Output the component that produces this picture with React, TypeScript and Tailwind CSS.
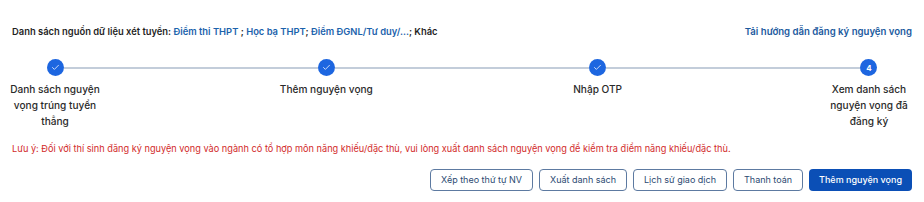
import { Check } from 'lucide-react';

const steps = [
  { label: 'Danh sách nguyện vọng trúng tuyển thẳng', done: true },
  { label: 'Thêm nguyện vọng', done: true },
  { label: 'Nhập OTP', done: true },
  { label: 'Xem danh sách nguyện vọng đã đăng ký', done: false },
];

const actions = ['Xếp theo thứ tự NV', 'Xuất danh sách', 'Lịch sử giao dịch', 'Thanh toán'];

function App() {
  return (
    <div className="min-h-screen bg-white font-['Inter','Noto_Sans',sans-serif] px-3 pt-[24px]">
      <div className="flex justify-between items-center text-[9.4px] leading-[16px] font-semibold">
        <div className="text-[#1f1f1f]">
          Danh sách nguồn dữ liệu xét tuyển:{' '}
          <span className="text-[#1b62ac]">Điểm thi THPT</span> ;{' '}
          <span className="text-[#1b62ac]">Học bạ THPT</span>;{' '}
          <span className="text-[#1b62ac]">Điểm ĐGNL/Tư duy/...</span>; Khác
        </div>
        <a className="text-[#1b5a9e] text-[9.6px] cursor-pointer">Tải hướng dẫn đăng ký nguyện vọng</a>
      </div>

      <div className="flex mt-[19px] -mx-[2px]">
        {steps.map((s, i) => (
          <div key={i} className="contents">
            {i > 0 && <div className="flex-1 h-[2px] mt-[7.5px] bg-[#c3cdda]" />}
            <div className="w-[90px] flex flex-col items-center">
              <div className="w-full flex items-center">
                <div className={`flex-1 h-[2px] ${i === 0 ? 'bg-transparent' : 'bg-[#c3cdda]'}`} />
                <div className="w-[17px] h-[17px] rounded-full bg-[#1d66e0] flex items-center justify-center text-white">
                  {s.done ? (
                    <Check size={9} strokeWidth={2} />
                  ) : (
                    <span className="text-[8px] font-bold leading-none">{i + 1}</span>
                  )}
                </div>
                <div className={`flex-1 h-[2px] ${i === steps.length - 1 ? 'bg-transparent' : 'bg-[#c3cdda]'}`} />
              </div>
              <div className="w-[100px] shrink-0 mt-[5px] text-center text-[10.1px] leading-[16px] font-medium text-[#2a2a2a]">
                {s.label}
              </div>
            </div>
          </div>
        ))}
      </div>

      <p className="mt-[12px] text-[9.2px] leading-[16px] text-[#d22b2b]">
        Lưu ý: Đối với thí sinh đăng ký nguyện vọng vào ngành có tổ hợp môn năng khiếu/đặc thù, vui lòng xuất danh sách nguyện vọng để kiểm tra điểm năng khiếu/đặc thù.
      </p>

      <div className="flex justify-end gap-[6px] mt-[12px]">
        {actions.map((a) => (
          <button
            key={a}
            className="h-[22px] px-[10px] rounded-[4px] border border-[#5d7aa1] text-[9px] text-[#2c4a72] bg-white"
          >
            {a}
          </button>
        ))}
        <button className="h-[22px] px-[10px] rounded-[4px] bg-[#0b4fb6] text-[9px] font-medium text-white">
          Thêm nguyện vọng
        </button>
      </div>
    </div>
  );
}

export default App;
